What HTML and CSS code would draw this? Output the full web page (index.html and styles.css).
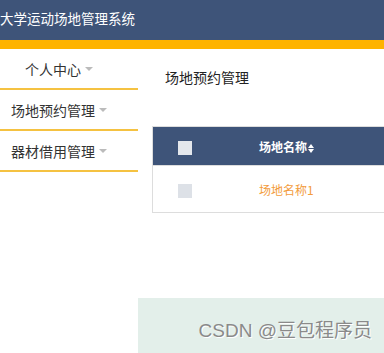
FILE: index.html
```html
<!DOCTYPE html>
<html lang="zh-CN">

<head>
    <meta charset="UTF-8">
    <meta name="viewport" content="width=device-width, initial-scale=1.0">
    <title>大学运动场地管理系统</title>
    <link rel="stylesheet" href="styles.css">
</head>

<body>

    <!-- Top bar -->
    <header class="topbar">
        <span class="topbar-title">大学运动场地管理系统</span>
    </header>

    <div class="layout">
        <!-- Side menu -->
        <aside class="sidebar">
            <div class="menu-item">个人中心<span class="caret"></span></div>
            <div class="menu-item">场地预约管理<span class="caret"></span></div>
            <div class="menu-item">器材借用管理<span class="caret"></span></div>
        </aside>

        <main class="content">
            <div class="panel">
                <h2 class="panel-title">场地预约管理</h2>

                <table class="data-table">
                    <thead>
                        <tr>
                            <th class="col-check"><span class="check"></span></th>
                            <th class="col-name">场地名称<span class="sort"></span></th>
                        </tr>
                    </thead>
                    <tbody>
                        <tr>
                            <td class="col-check"><span class="check"></span></td>
                            <td class="col-name"><span class="link">场地名称1</span></td>
                        </tr>
                    </tbody>
                </table>
            </div>

            <footer class="footer">
                <span class="watermark">CSDN @豆包程序员</span>
            </footer>
        </main>
    </div>

</body>

</html>
```

FILE: styles.css
```css
body {
    margin: 0;
    font-family: "Noto Sans CJK SC", "Liberation Sans", sans-serif;
    background-color: #fff;
    color: #333;
}

/* Top bar */
.topbar {
    height: 40px;
    background-color: #3e5479;
    border-bottom: 9px solid #feb300;
    display: flex;
    align-items: center;
}

.topbar-title {
    color: #fff;
    font-size: 13.5px;
    margin-top: -5px;
}

.layout {
    display: flex;
}

/* Side menu */
.sidebar {
    width: 138px;
    flex-shrink: 0;
}

.menu-item {
    height: 39px;
    border-bottom: 2px solid #f5c241;
    display: flex;
    align-items: center;
    justify-content: center;
    padding-right: 20px;
    font-size: 14px;
    color: #333;
}

.caret {
    display: inline-block;
    width: 0;
    height: 0;
    margin-left: 4px;
    border-left: 4px solid transparent;
    border-right: 4px solid transparent;
    border-top: 4px solid #bbb;
}

/* Main area */
.content {
    flex: 1;
    overflow: hidden;
    display: flex;
    flex-direction: column;
}

.panel {
    padding-left: 14px;
}

.panel-title {
    margin: 18px 0 39px 13px;
    font-size: 14px;
    font-weight: normal;
    line-height: 20px;
    color: #222;
}

.data-table {
    width: 320px;
    border-collapse: collapse;
    border: 1px solid #ddd;
    font-size: 12px;
}

.data-table th {
    height: 38px;
    background-color: #3e5479;
    color: #fff;
    font-weight: bold;
    text-align: left;
    padding: 0;
}

.data-table td {
    height: 46px;
    padding: 0;
    border-top: 1px solid #ddd;
}

.col-check {
    width: 64px;
    text-align: center !important;
}

.col-name {
    padding-left: 42px !important;
}

.check {
    display: inline-block;
    width: 14px;
    height: 14px;
    background-color: #dde1e7;
    vertical-align: middle;
}

th .check {
    background-color: #e4e7ec;
}

.sort {
    display: inline-block;
    width: 7px;
    height: 9px;
    margin-left: 1px;
    vertical-align: -1px;
    position: relative;
}

.sort::before,
.sort::after {
    content: "";
    position: absolute;
    left: 0;
    border-left: 3.5px solid transparent;
    border-right: 3.5px solid transparent;
}

.sort::before {
    top: 0;
    border-bottom: 4px solid #fff;
}

.sort::after {
    bottom: 0;
    border-top: 4px solid #fff;
}

.link {
    color: #f39c3c;
}

/* Footer */
.footer {
    margin-top: 85px;
    height: 55px;
    background-color: #e3efea;
    display: flex;
    justify-content: flex-end;
    align-items: center;
    padding-right: 12px;
    padding-top: 6px;
    box-sizing: border-box;
}

.watermark {
    font-family: "Liberation Sans", "Noto Sans CJK SC", sans-serif;
    font-size: 19px;
    color: #8a8a8a;
    text-shadow: 1px 1px 0 #fff;
}
```
